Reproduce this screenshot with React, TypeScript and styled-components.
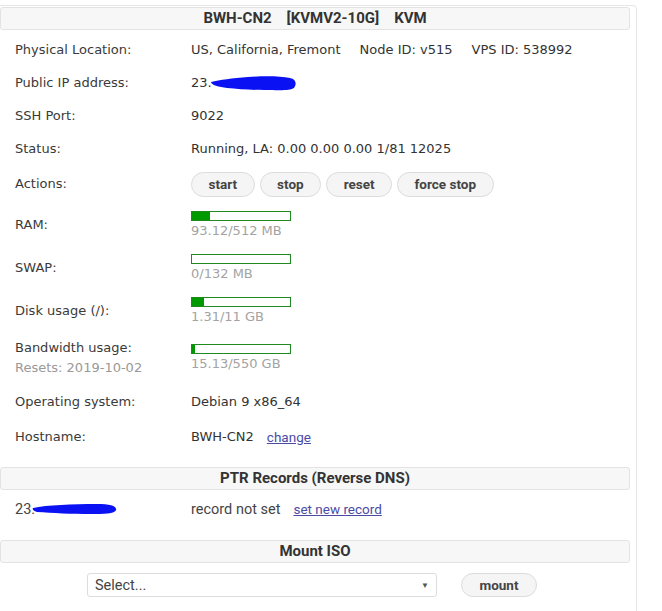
import * as React from 'react';
import styled, { createGlobalStyle } from 'styled-components';

const GlobalStyle = createGlobalStyle`
  html, body {
    margin: 0;
    padding: 0;
    background: #fff;
  }
  body {
    font-family: "DejaVu Sans", Verdana, sans-serif;
    font-size: 13px;
    color: #333;
  }
`;

const Panel = styled.div`
  box-sizing: border-box;
  width: 645px;
  min-height: 620px;
  margin: 5px 0 0 -8px;
  padding: 1px 6px 0 7px;
  border: 1px solid #e6e6e6;
  border-radius: 4px;
`;

const SectionTitle = styled.div<{ $gap?: number }>`
  box-sizing: border-box;
  height: 23px;
  margin-top: ${props => props.$gap || 0}px;
  border: 1px solid #e3e3e3;
  border-radius: 3px;
  background: #f7f7f7;
  text-align: center;
  font-family: Roboto, "Liberation Sans", sans-serif;
  font-weight: 700;
  font-size: 15px;
  line-height: 21px;
  color: #333;
`;

const TitlePart = styled.span`
  & + & {
    margin-left: 15px;
  }
`;

const Rows = styled.div`
  padding-top: 3px;
`;

const Row = styled.div<{ $h: number }>`
  display: grid;
  grid-template-columns: 176px 1fr;
  align-items: center;
  height: ${props => props.$h}px;
  padding-left: 15px;
`;

const Label = styled.div`
  color: #3a3a3a;
  line-height: 20px;
`;

const SubLabel = styled.div`
  color: #999;
  line-height: 20px;
`;

const Value = styled.div`
  display: flex;
  align-items: center;
  white-space: nowrap;
`;

const Spaced = styled.span`
  margin-left: 19px;
`;

const Link = styled.a`
  margin-left: 13px;
  font-family: Roboto, "Liberation Sans", sans-serif;
  font-size: 13.5px;
  color: #4b4ba6;
  text-decoration: underline;
  cursor: pointer;
`;

const Buttons = styled.div`
  display: flex;
  gap: 5px;
`;

const PillButton = styled.button`
  box-sizing: border-box;
  height: 25px;
  padding: 0 16.5px;
  border: 1px solid #dcdcdc;
  border-radius: 13px;
  background: #f5f5f5;
  font-family: Roboto, "Liberation Sans", sans-serif;
  font-weight: 700;
  font-size: 13.5px;
  color: #444;
  cursor: pointer;
`;

const Meter = styled.div`
  display: flex;
  flex-direction: column;
`;

const Bar = styled.div`
  box-sizing: border-box;
  width: 100px;
  height: 10px;
  border: 1px solid #1f8a1f;
  background: #fff;
`;

const Fill = styled.div`
  height: 100%;
  background: #009a00;
`;

const Usage = styled.div`
  margin-top: 2px;
  color: #a3a3a3;
  line-height: 16px;
`;

const Redaction = styled.svg<{ $shift: number }>`
  margin-left: ${props => props.$shift}px;
  flex: none;
`;

const PtrRow = styled.div`
  display: grid;
  grid-template-columns: 176px 1fr;
  align-items: center;
  height: 38px;
  padding-left: 15px;
  font-family: Roboto, "Liberation Sans", sans-serif;
  font-size: 14.5px;
  color: #444;
`;

const MountRow = styled.div`
  display: flex;
  justify-content: center;
  align-items: center;
  gap: 24px;
  padding: 10px 6px 0 0;
`;

const SelectBox = styled.div`
  box-sizing: border-box;
  display: flex;
  align-items: center;
  justify-content: space-between;
  width: 350px;
  height: 24px;
  padding: 0 7px;
  border: 1px solid #dddddd;
  border-radius: 3px;
  background: #fff;
  font-family: Roboto, "Liberation Sans", sans-serif;
  font-size: 14.5px;
  color: #444;
`;

const Caret = styled.span`
  font-size: 8px;
  color: #555;
`;

const MountButton = styled(PillButton)`
  width: 76px;
  height: 24px;
  padding: 0;
`;

type MeterProps = { used: number; total: number; unit: string };

const UsageMeter = ({ used, total, unit }: MeterProps) => (
  <Meter>
    <Bar>
      <Fill style={{ width: `${Math.round((used / total) * 100)}%` }} />
    </Bar>
    <Usage>{used}/{total} {unit}</Usage>
  </Meter>
);

// hand-drawn marker strokes hiding the address
const IpScribble = () => (
  <Redaction $shift={-2} width="88" height="17" viewBox="0 0 88 17">
    <path
      d="M1 8 C 10 6, 22 4, 38 3 C 54 2, 70 2, 80 4 C 86 5, 87 10, 84 14 C 80 17, 68 16, 54 16 C 40 16, 28 15, 17 14 C 9 13, 1 11, 1 8 Z"
      fill="#0a12f4"
    />
  </Redaction>
);

const PtrScribble = () => (
  <Redaction $shift={-3} width="86" height="12" viewBox="0 0 86 12">
    <path
      d="M1 5 C 15 2, 40 1, 65 1 C 78 1, 85 3, 84 7 C 83 11, 72 11, 58 11 C 40 11, 20 10, 5 9 C 1 8, 0 6, 1 5 Z"
      fill="#0a12f4"
    />
  </Redaction>
);

export default class App extends React.PureComponent {
  render() {
    return (
      <>
        <GlobalStyle />
        <Panel>
          <SectionTitle>
            <TitlePart>BWH-CN2</TitlePart>
            <TitlePart>[KVMV2-10G]</TitlePart>
            <TitlePart>KVM</TitlePart>
          </SectionTitle>

          <Rows>
            <Row $h={33}>
              <Label>Physical Location:</Label>
              <Value>
                US, California, Fremont
                <Spaced>Node ID: v515</Spaced>
                <Spaced>VPS ID: 538992</Spaced>
              </Value>
            </Row>
            <Row $h={33}>
              <Label>Public IP address:</Label>
              <Value>
                23.
                <IpScribble />
              </Value>
            </Row>
            <Row $h={33}>
              <Label>SSH Port:</Label>
              <Value>9022</Value>
            </Row>
            <Row $h={33}>
              <Label>Status:</Label>
              <Value>Running, LA: 0.00 0.00 0.00 1/81 12025</Value>
            </Row>
            <Row $h={38}>
              <Label>Actions:</Label>
              <Buttons>
                <PillButton>start</PillButton>
                <PillButton>stop</PillButton>
                <PillButton>reset</PillButton>
                <PillButton>force stop</PillButton>
              </Buttons>
            </Row>
            <Row $h={43}>
              <Label>RAM:</Label>
              <UsageMeter used={93.12} total={512} unit="MB" />
            </Row>
            <Row $h={43}>
              <Label>SWAP:</Label>
              <UsageMeter used={0} total={132} unit="MB" />
            </Row>
            <Row $h={43}>
              <Label>Disk usage (/):</Label>
              <UsageMeter used={1.31} total={11} unit="GB" />
            </Row>
            <Row $h={52}>
              <div>
                <Label>Bandwidth usage:</Label>
                <SubLabel>Resets: 2019-10-02</SubLabel>
              </div>
              <UsageMeter used={15.13} total={550} unit="GB" />
            </Row>
            <Row $h={35}>
              <Label>Operating system:</Label>
              <Value>Debian 9 x86_64</Value>
            </Row>
            <Row $h={35}>
              <Label>Hostname:</Label>
              <Value>
                BWH-CN2
                <Link>change</Link>
              </Value>
            </Row>
          </Rows>

          <SectionTitle $gap={13}>PTR Records (Reverse DNS)</SectionTitle>
          <PtrRow>
            <Value>
              23.
              <PtrScribble />
            </Value>
            <Value>
              record not set
              <Link>set new record</Link>
            </Value>
          </PtrRow>

          <SectionTitle $gap={12}>Mount ISO</SectionTitle>
          <MountRow>
            <SelectBox>
              <span>Select...</span>
              <Caret>▼</Caret>
            </SelectBox>
            <MountButton>mount</MountButton>
          </MountRow>
        </Panel>
      </>
    );
  }
}
